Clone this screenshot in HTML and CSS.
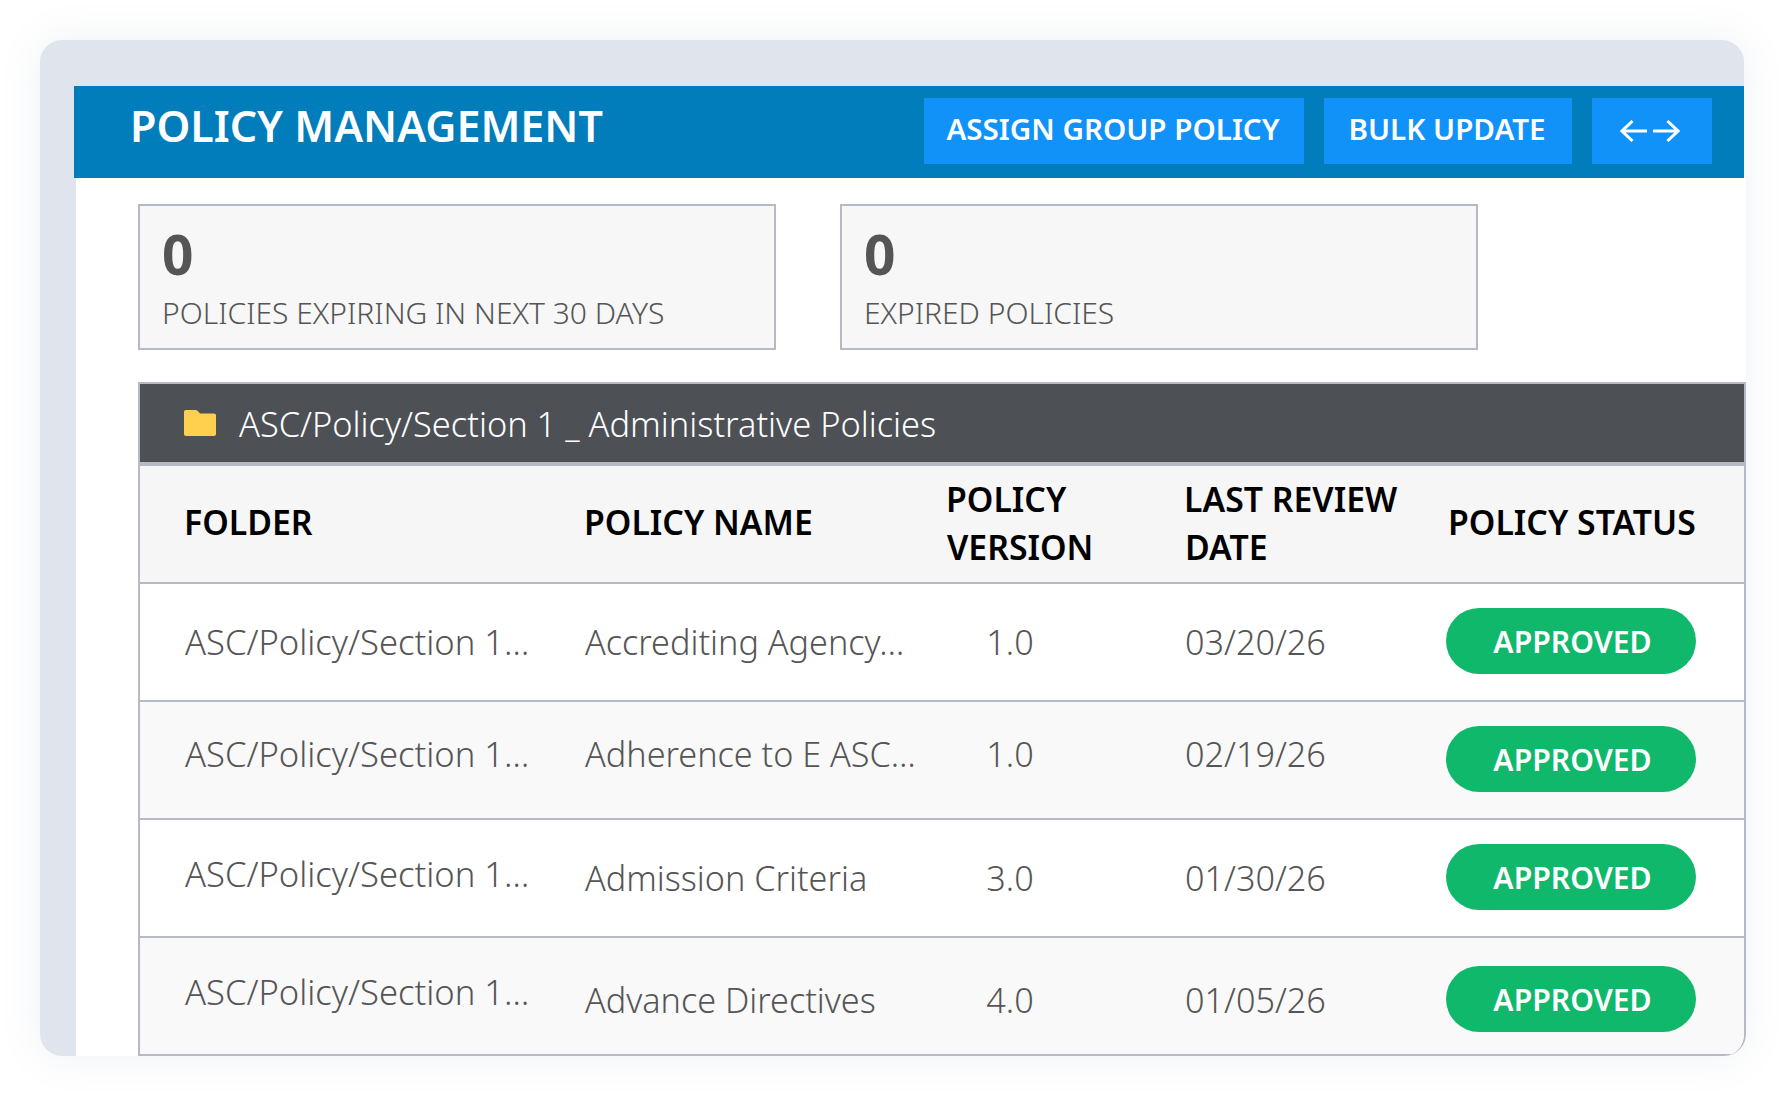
FILE: index.html
```html
<!DOCTYPE html>
<html lang="en">
<head>
    <meta charset="UTF-8">
    <title>Policy Management</title>
    <link rel="stylesheet" href="styles.css">
</head>
<body>
    <div class="frame">
        <header class="header">
            <h1 class="title">POLICY MANAGEMENT</h1>
            <div class="actions">
                <button class="btn btn-assign">ASSIGN GROUP POLICY</button>
                <button class="btn btn-bulk">BULK UPDATE</button>
                <button class="btn btn-icon" aria-label="Expand">
                    <svg width="60" height="24" viewBox="0 0 60 24" fill="none" stroke="#fff" stroke-width="3">
                        <path d="M27 12H2M12.500 2L2 12l10.500 10"/>
                        <path d="M33 12h25M47.500 2L58 12 47.500 22"/>
                    </svg>
                </button>
            </div>
        </header>

        <main class="panel">
            <div class="stats">
                <div class="stat">
                    <div class="stat-value">0</div>
                    <div class="stat-label">POLICIES EXPIRING IN NEXT 30 DAYS</div>
                </div>
                <div class="stat">
                    <div class="stat-value">0</div>
                    <div class="stat-label">EXPIRED POLICIES</div>
                </div>
            </div>

            <section class="policies">
                <div class="policies-title">
                    <svg class="folder" width="32" height="26" viewBox="0 0 32 26">
                        <path fill="#ffd04d" d="M2 0h9c1.500 0 2.500.6 3.300 1.600L16 3.500h14c1.200 0 2 .8 2 2V24c0 1.200-.8 2-2 2H2c-1.200 0-2-.8-2-2V2C0 .8.800 0 2 0z"/>
                    </svg>
                    <span>ASC/Policy/Section 1 _ Administrative Policies</span>
                </div>
                <table class="table">
                    <colgroup>
                        <col class="col-folder">
                        <col class="col-name">
                        <col class="col-version">
                        <col class="col-date">
                        <col class="col-status">
                    </colgroup>
                    <thead>
                        <tr>
                            <th class="th-single">FOLDER</th>
                            <th class="th-single">POLICY NAME</th>
                            <th class="th-double">POLICY<br>VERSION</th>
                            <th class="th-double">LAST REVIEW<br>DATE</th>
                            <th class="th-single">POLICY STATUS</th>
                        </tr>
                    </thead>
                    <tbody>
                        <tr>
                            <td class="up-xs">ASC/Policy/Section 1…</td>
                            <td class="up-xs">Accrediting Agency…</td>
                            <td class="up-xs"><span class="version">1.0</span></td>
                            <td class="up-xs">03/20/26</td>
                            <td class="up-xs"><span class="pill">APPROVED</span></td>
                        </tr>
                        <tr class="row-even">
                            <td class="up-lg">ASC/Policy/Section 1…</td>
                            <td class="up-lg">Adherence to E ASC…</td>
                            <td class="up-lg"><span class="version">1.0</span></td>
                            <td class="up-lg">02/19/26</td>
                            <td class="up-xs"><span class="pill">APPROVED</span></td>
                        </tr>
                        <tr>
                            <td class="up-sm">ASC/Policy/Section 1…</td>
                            <td class="up-xs">Admission Criteria</td>
                            <td class="up-xs"><span class="version">3.0</span></td>
                            <td class="up-xs">01/30/26</td>
                            <td class="up-xs"><span class="pill">APPROVED</span></td>
                        </tr>
                        <tr class="row-even">
                            <td class="up-sm">ASC/Policy/Section 1…</td>
                            <td class="down">Advance Directives</td>
                            <td class="down"><span class="version">4.0</span></td>
                            <td class="down">01/05/26</td>
                            <td class="down"><span class="pill">APPROVED</span></td>
                        </tr>
                    </tbody>
                </table>
            </section>
        </main>
    </div>
</body>
</html>
```

FILE: styles.css
```css
* {
    box-sizing: border-box;
}

body {
    margin: 0;
    background: #fff;
    font-family: "Noto Sans", sans-serif;
    overflow: hidden;
}

/* outer frame */
.frame {
    width: 1704px;
    height: 1016px;
    margin: 40px;
    padding-top: 46px;
    background: #e0e4ed;
    border-radius: 22px;
    box-shadow: 0 0 40px rgba(110, 130, 170, 0.12);
}

.header {
    display: flex;
    justify-content: space-between;
    height: 92px;
    margin-left: 34px;
    padding: 12px 32px 0 56px;
    background: #027dbb;
}

.title {
    margin: 0;
    color: #fff;
    font-size: 43px;
    font-weight: 600;
    line-height: 56px;
}

.actions {
    display: flex;
    gap: 20px;
}

.btn {
    height: 66px;
    padding: 0 2px 6px 0;
    border: none;
    background: #1192f8;
    color: #fff;
    font-family: inherit;
    font-size: 29.6px;
    font-weight: 600;
}

.btn-assign {
    width: 380px;
}

.btn-bulk {
    width: 248px;
}

.btn-icon {
    display: flex;
    align-items: center;
    justify-content: center;
    width: 120px;
    padding: 0 4px 0 0;
}

.panel {
    width: 1670px;
    height: 878px;
    margin-left: 36px;
    padding: 26px 0 0 62px;
    background: #fff;
    border-bottom-right-radius: 22px;
}

.stats {
    display: flex;
    gap: 64px;
}

.stat {
    width: 638px;
    height: 146px;
    padding: 15px 22px 13px;
    border: 2px solid #b6bac6;
    background: #f7f7f7;
}

.stat-value {
    color: #555;
    font-size: 55px;
    font-weight: 700;
    line-height: 66px;
}

.stat-label {
    margin-top: 4px;
    color: #555;
    font-size: 30px;
    font-weight: 300;
    line-height: 44px;
}

.policies {
    width: 1608px;
    margin-top: 32px;
    border: 2px solid #b6bac6;
    border-bottom: none;
    border-bottom-right-radius: 22px;
    overflow: hidden;
}

.policies-title {
    display: flex;
    align-items: center;
    gap: 23px;
    height: 82px;
    padding-left: 44px;
    border-bottom: 4px solid #b6bac6;
    background: #4d5055;
    color: #fff;
    font-size: 34.4px;
    font-weight: 300;
}

.table {
    width: 100%;
    border-collapse: separate;
    border-spacing: 0;
    table-layout: fixed;
}

.col-folder { width: 445px; }
.col-name { width: 362px; }
.col-version { width: 238px; }
.col-date { width: 264px; }

.table th,
.table td {
    height: 118px;
    padding: 0;
    border-bottom: 2px solid #b6bac6;
    vertical-align: middle;
    text-align: left;
}

.table th {
    background: #f6f6f7;
    color: #000;
    font-size: 33.8px;
    font-weight: 600;
    line-height: 48px;
    text-indent: -1px;
}

.table th.th-single {
    padding-bottom: 4px;
}

.table th.th-double {
    padding-bottom: 2px;
}

.table td {
    color: #555;
    font-size: 34.2px;
    font-weight: 300;
    white-space: nowrap;
}

.table th:first-child,
.table td:first-child {
    padding-left: 45px;
}

.table td:first-child {
    font-size: 34.6px;
}

.row-even td {
    background: #f9f9f9;
}

/* cells in the source sit a bit off the row centre */
.table td.up-xs { padding-bottom: 2px; }
.table td.up-lg { padding-bottom: 13px; }
.table td.up-sm { padding-bottom: 10px; }
.table td.down { padding-top: 6px; }

.version {
    display: block;
    width: 126px;
    text-align: center;
}

.pill {
    display: flex;
    align-items: center;
    justify-content: center;
    width: 250px;
    height: 66px;
    margin-left: -3px;
    padding-left: 3px;
    border-radius: 33px;
    background: #10b86c;
    color: #fff;
    font-size: 30.2px;
    font-weight: 600;
}
```
